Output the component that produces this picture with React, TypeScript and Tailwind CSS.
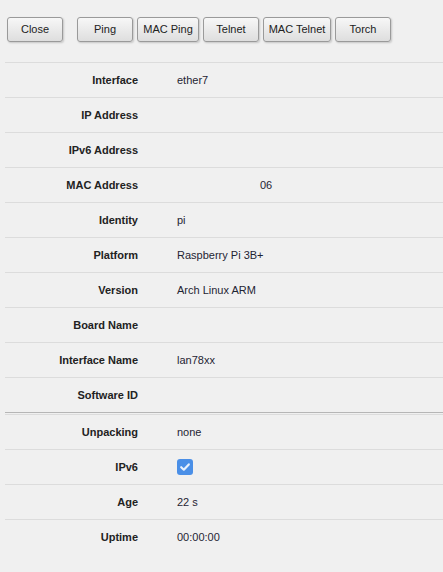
import { ReactNode } from "react";

interface Field {
  label: string;
  value?: ReactNode;
}

const general: Field[] = [
  { label: "Interface", value: "ether7" },
  { label: "IP Address" },
  { label: "IPv6 Address" },
  { label: "MAC Address", value: <span className="pl-[83px]">06</span> },
  { label: "Identity", value: "pi" },
  { label: "Platform", value: "Raspberry Pi 3B+" },
  { label: "Version", value: "Arch Linux ARM" },
  { label: "Board Name" },
  { label: "Interface Name", value: "lan78xx" },
  { label: "Software ID" },
];

const Checked = () => (
  <span className="flex h-4 w-4 items-center justify-center rounded-[3px] bg-[#4a8fe7]">
    <svg width="12" height="12" viewBox="0 0 12 12">
      <path d="M2.2 6.2 L4.8 8.7 L9.8 3.4" fill="none" stroke="#e9f1fc" strokeWidth="2.2" strokeLinecap="round" strokeLinejoin="round" />
    </svg>
  </span>
);

const status: Field[] = [
  { label: "Unpacking", value: "none" },
  { label: "IPv6", value: <Checked /> },
  { label: "Age", value: "22 s" },
  { label: "Uptime", value: "00:00:00" },
];

const Row = ({ label, value, first }: Field & { first?: boolean }) => (
  <div className={`flex h-[35px] items-center border-t ${first ? "border-[#dcdcdc]" : "border-[#dcdcdc]"}`}>
    <div className="w-[133px] text-right font-bold text-[#222]">{label}</div>
    <div className="ml-[39px] flex items-center text-[#1f2433]">{value}</div>
  </div>
);

const Button = ({ children }: { children: ReactNode }) => (
  <button className="h-[25px] w-[56px] whitespace-nowrap rounded-[3px] border border-[#9a9a9a] bg-gradient-to-b from-[#f7f7f7] to-[#dedede] text-[#222] shadow-[1px_1px_2px_rgba(0,0,0,0.18)]">
    {children}
  </button>
);

export default function App() {
  return (
    <div
      className="min-h-[572px] bg-[#f0f0f0] text-[11px] leading-none"
      style={{ fontFamily: '"Liberation Sans", Arial, sans-serif' }}
    >
      <div className="flex pl-[7px] pt-[17px]">
        <Button>Close</Button>
        <div className="ml-[14px] flex gap-[4px]">
          <Button>Ping</Button>
          <span className="[&>button]:w-[62px]">
            <Button>MAC Ping</Button>
          </span>
          <Button>Telnet</Button>
          <span className="[&>button]:w-[68px]">
            <Button>MAC Telnet</Button>
          </span>
          <Button>Torch</Button>
        </div>
      </div>

      <div className="ml-[5px] mt-[20px]">
        {general.map((f) => (
          <Row key={f.label} {...f} />
        ))}
        <div className="h-[2px] border-t border-[#b6b6b6]" />
        {status.map((f) => (
          <Row key={f.label} {...f} />
        ))}
      </div>
    </div>
  );
}
